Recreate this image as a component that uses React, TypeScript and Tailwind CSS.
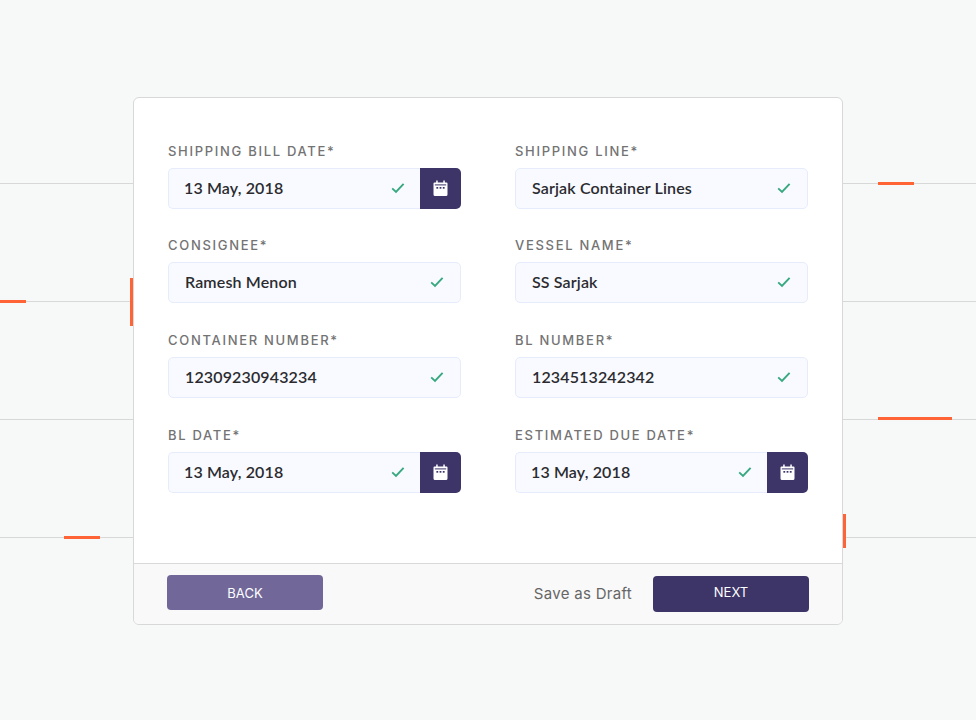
const Check = () => (
  <svg width="14" height="12" viewBox="0 0 14 12" fill="none" className="mb-[1px] shrink-0">
    <path d="M1.2 6.4 L5 10 L12.6 1.8" stroke="#38a87f" strokeWidth="1.9" />
  </svg>
);

const Calendar = () => (
  <svg width="15" height="17" viewBox="0 0 15 17" fill="none">
    <path d="M1.5 2.5h12a1 1 0 0 1 1 1v11a1.5 1.5 0 0 1-1.5 1.5H2a1.5 1.5 0 0 1-1.5-1.5V3.500a1 1 0 0 1 1-1z" fill="#fff" />
    <rect x="3.2" y="0.5" width="1.5" height="3" fill="#fff" />
    <rect x="10.3" y="0.5" width="1.5" height="3" fill="#fff" />
    <rect x="1.800" y="4.400" width="11.400" height="1" fill="#3d3468" />
    <rect x="3.400" y="7" width="1.800" height="1.700" fill="#3d3468" />
    <rect x="6.600" y="7" width="1.800" height="1.700" fill="#3d3468" />
    <rect x="9.800" y="7" width="1.800" height="1.700" fill="#3d3468" />
  </svg>
);

type F = { label: string; value: string; date?: boolean };

const fields: F[] = [
  { label: "SHIPPING BILL DATE*", value: "13 May, 2018", date: true },
  { label: "SHIPPING LINE*", value: "Sarjak Container Lines" },
  { label: "CONSIGNEE*", value: "Ramesh Menon" },
  { label: "VESSEL NAME*", value: "SS Sarjak" },
  { label: "CONTAINER NUMBER*", value: "12309230943234" },
  { label: "BL NUMBER*", value: "1234513242342" },
  { label: "BL DATE*", value: "13 May, 2018", date: true },
  { label: "ESTIMATED DUE DATE*", value: "13 May, 2018", date: true },
];

const Field = ({ label, value, date }: F) => (
  <div className="flex flex-col">
    <div className="h-[26px] text-[13px] leading-[18px] tracking-[1.7px] font-medium text-[#737373] font-['Inter','Liberation_Sans',sans-serif]">
      {label}
    </div>
    <div className="flex h-[41px]">
      <div
        className={`flex flex-1 items-center justify-between bg-[#f8faff] border border-[#e6ecfc] text-[16px] tracking-[0.14px] font-semibold text-[#2b2b2f] font-['Lato','Noto_Sans',sans-serif] ${
          date ? "rounded-l-[5px] border-r-0 pl-[15px] pr-[15px]" : "rounded-[5px] pl-[16px] pr-[16px]"
        }`}
      >
        <span className="pb-[2px]">{value}</span>
        <Check />
      </div>
      {date && (
        <div className="flex w-[41px] items-center justify-center rounded-r-[5px] bg-[#3d3468]">
          <Calendar />
        </div>
      )}
    </div>
  </div>
);

export default function App() {
  return (
    <div className="relative h-[720px] w-[976px] overflow-hidden bg-[#f7f8f8]">
      {[183, 301, 419, 537].map((y) => (
        <div key={y} className="absolute left-0 right-0 h-px bg-[#d8d8d8]" style={{ top: y }} />
      ))}
      <div className="absolute left-0 top-[300px] h-[3px] w-[26px] bg-[#ff6436]" />
      <div className="absolute left-[130px] top-[278px] h-[48px] w-[3px] bg-[#ff6436]" />
      <div className="absolute left-[64px] top-[536px] h-[3px] w-[36px] bg-[#ff6436]" />
      <div className="absolute left-[878px] top-[182px] h-[3px] w-[36px] bg-[#ff6436]" />
      <div className="absolute left-[878px] top-[417px] h-[3px] w-[74px] bg-[#ff6436]" />
      <div className="absolute left-[843px] top-[514px] h-[34px] w-[3px] bg-[#ff6436]" />

      <div className="relative flex justify-center pt-[97px]">
        <div className="flex h-[528px] w-[710px] flex-col overflow-hidden rounded-[6px] border border-[#d8d8d8] bg-white">
          <div className="grid flex-1 grid-cols-2 grid-rows-[94px_95px_95px_auto] content-start gap-x-[54px] px-[34px] pt-[44px]">
            {fields.map((f) => (
              <Field key={f.label} {...f} />
            ))}
          </div>
          <div className="flex h-[61px] items-center justify-between border-t border-[#d8d8d8] bg-[#f9f9f9] pl-[33px] pr-[33px]">
            <button className="mb-[3px] h-[35px] w-[156px] rounded-[4px] bg-[#716899] pt-[3px] text-[13px] text-white font-['Inter','Liberation_Sans',sans-serif]">
              BACK
            </button>
            <div className="flex items-center gap-[21px]">
              <span className="text-[15px] tracking-[0.3px] text-[#666666] font-['Inter','Liberation_Sans',sans-serif]">
                Save as Draft
              </span>
              <button className="h-[36px] w-[156px] rounded-[4px] bg-[#3d3468] pb-[2px] text-[13px] text-white font-['Inter','Liberation_Sans',sans-serif]">
                NEXT
              </button>
            </div>
          </div>
        </div>
      </div>
    </div>
  );
}
